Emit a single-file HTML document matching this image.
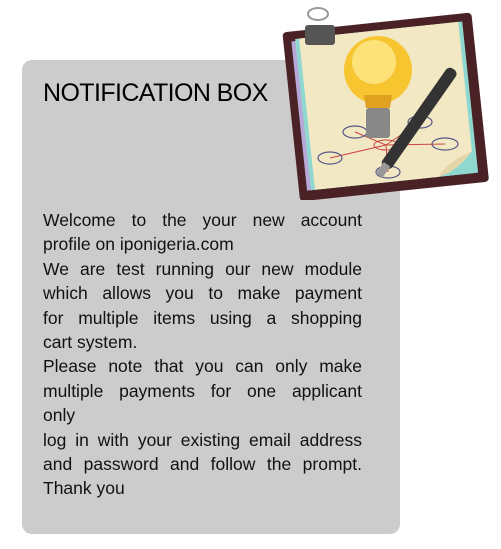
<!DOCTYPE html>
<html><head><style>
body{margin:0;width:501px;height:549px;background:#fff;position:relative;overflow:hidden;font-family:"Liberation Sans",sans-serif}
.box{position:absolute;left:22px;top:60px;width:378px;height:474px;background:#cccccc;border-radius:10px}
h1{position:absolute;left:43px;top:79px;margin:0;font-weight:normal;font-size:25px;letter-spacing:-0.6px;color:#000;white-space:nowrap}
.t{position:absolute;left:43px;top:208px;width:319px;font-size:17.5px;line-height:24.4px;text-align:justify;color:#111}
.t span{display:block;text-align:justify;text-align-last:justify}
.t span.l{text-align-last:left}
</style></head><body>
<div class="box"></div>
<h1>NOTIFICATION BOX</h1>
<div class="t">
<span>Welcome to the your new account</span>
<span class="l">profile on iponigeria.com</span>
<span>We are test running our new module</span>
<span>which allows you to make payment</span>
<span>for multiple items using a shopping</span>
<span class="l">cart system.</span>
<span>Please note that you can only make</span>
<span>multiple payments for one applicant</span>
<span class="l">only</span>
<span>log in with your existing email address</span>
<span>and password and follow the prompt.</span>
<span class="l">Thank you</span>
</div>
<svg style="position:absolute;left:270px;top:0" width="231" height="200" viewBox="0 0 231 200">
<g transform="rotate(-6 115 100)">
<rect x="20" y="22" width="190" height="170" rx="4" fill="#4a2226"/>
<rect x="28" y="32" width="170" height="150" fill="#b8a8d8"/>
<rect x="32" y="30" width="168" height="152" fill="#8fd8d0"/>
<path d="M36 30 H196 V160 Q180 178 160 182 H36 Z" fill="#f2e8c4"/>
<path d="M196 160 Q180 178 160 182 Q170 168 196 160Z" fill="#e4d6a8"/>
</g>
<rect x="35" y="25" width="30" height="20" fill="#555" rx="3"/>
<ellipse cx="48" cy="14" rx="10" ry="6" fill="none" stroke="#999" stroke-width="2"/>
<g stroke="#c44" stroke-width="1" fill="none">
<line x1="116" y1="145" x2="60" y2="158"/><line x1="116" y1="145" x2="175" y2="144"/>
<line x1="116" y1="145" x2="118" y2="172"/><line x1="116" y1="145" x2="85" y2="132"/>
<line x1="116" y1="145" x2="150" y2="122"/>
<ellipse cx="116" cy="145" rx="12" ry="5"/>
</g>
<g stroke="#558" stroke-width="1.2" fill="none">
<ellipse cx="60" cy="158" rx="12" ry="6"/><ellipse cx="175" cy="144" rx="13" ry="6"/>
<ellipse cx="118" cy="172" rx="12" ry="6"/><ellipse cx="85" cy="132" rx="12" ry="6"/><ellipse cx="150" cy="122" rx="12" ry="6"/>
</g>
<circle cx="108" cy="70" r="34" fill="#f7c530"/>
<circle cx="104" cy="62" r="22" fill="#fde27a"/>
<path d="M94 95 L122 95 L120 108 L96 108Z" fill="#e0a020"/>
<rect x="96" y="108" width="24" height="30" rx="3" fill="#888"/>
<g transform="rotate(-55 148 120)"><rect x="90" y="114" width="120" height="12" rx="5" fill="#333"/><rect x="80" y="116" width="14" height="8" fill="#999"/></g>
</svg>
</body></html>
